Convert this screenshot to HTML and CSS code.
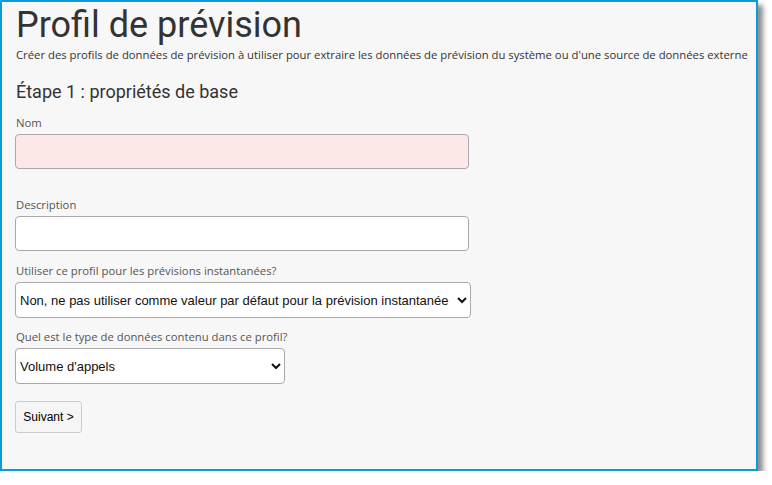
FILE: index.html
```html
<!DOCTYPE html>
<html lang="fr">
<head>
  <meta charset="UTF-8">
  <meta name="viewport" content="width=device-width, initial-scale=1.0">
  <title>Profil de prévision</title>
  <link rel="stylesheet" href="styles.css">
</head>
<body>
<div class="frame">
  <h1 class="page-title">Profil de prévision</h1>
  <p class="page-desc">Créer des profils de données de prévision à utiliser pour extraire les données de prévision du système ou d'une source de données externe</p>

  <h2 class="step-title">Étape 1 : propriétés de base</h2>

  <form class="profile-form">
    <div class="field field-name">
      <label for="nom">Nom</label>
      <input type="text" id="nom" class="text-input invalid">
    </div>

    <div class="field field-desc">
      <label for="description">Description</label>
      <input type="text" id="description" class="text-input">
    </div>

    <div class="field field-instant">
      <label for="instant">Utiliser ce profil pour les prévisions instantanées?</label>
      <select id="instant" class="select-input select-wide">
        <option>Non, ne pas utiliser comme valeur par défaut pour la prévision instantanée</option>
      </select>
    </div>

    <div class="field">
      <label for="type">Quel est le type de données contenu dans ce profil?</label>
      <select id="type" class="select-input select-narrow">
        <option>Volume d'appels</option>
      </select>
    </div>

    <button type="button" class="next-btn">Suivant &gt;</button>
  </form>
</div>
</body>
</html>
```

FILE: styles.css
```css
body {
  margin: 0;
  background: #ffffff;
  font-family: "Open Sans", sans-serif;
}
.frame {
  box-sizing: border-box;
  width: 758px;
  height: 471px;
  padding: 1px 13px 0;
  background: #f7f7f7;
  border: 2px solid #0a9bd8;
  box-shadow: 5px 5px 5px rgba(0, 0, 0, 0.45);
}
.page-title {
  margin: 0 0 0 1px;
  font-family: Roboto, sans-serif;
  font-weight: 400;
  font-size: 36px;
  line-height: 44px;
  color: #333333;
}
.page-desc {
  margin: 0 0 0 1px;
  font-size: 11.3px;
  line-height: 16px;
  color: #333333;
  white-space: nowrap;
}
.step-title {
  margin: 17px 0 0 1px;
  font-family: Roboto, sans-serif;
  font-weight: 400;
  font-size: 18px;
  line-height: 24px;
  color: #333333;
}
.profile-form {
  margin-top: 11px;
}
.field {
  margin-bottom: 12px;
}
.field-name {
  margin-bottom: 28px;
}
.field-instant {
  margin-bottom: 11px;
}
.field label {
  display: block;
  font-size: 11.3px;
  line-height: 15px;
  margin: 0 0 4px 1px;
  color: #555555;
}
.text-input {
  box-sizing: border-box;
  display: block;
  width: 454px;
  height: 35px;
  margin: 0;
  border: 1px solid #a9a9a9;
  border-radius: 4px;
  background: #ffffff;
}
.text-input.invalid {
  background: #fce8e6;
}
.select-input {
  box-sizing: border-box;
  display: block;
  height: 36px;
  margin: 0;
  padding: 0;
  border: 1px solid #a9a9a9;
  border-radius: 4px;
  background: #ffffff;
  font-family: "Liberation Sans", Arial, sans-serif;
  font-size: 13px;
  color: #111111;
}
.select-wide {
  width: 456px;
}
.select-narrow {
  width: 270px;
}
.next-btn {
  display: block;
  box-sizing: border-box;
  width: 67px;
  height: 32px;
  margin-top: 17px;
  padding: 0;
  border: 1px solid #cccccc;
  border-radius: 3px;
  background: #f5f5f5;
  font-family: "Liberation Sans", Arial, sans-serif;
  font-size: 12px;
  color: #000000;
}
```
